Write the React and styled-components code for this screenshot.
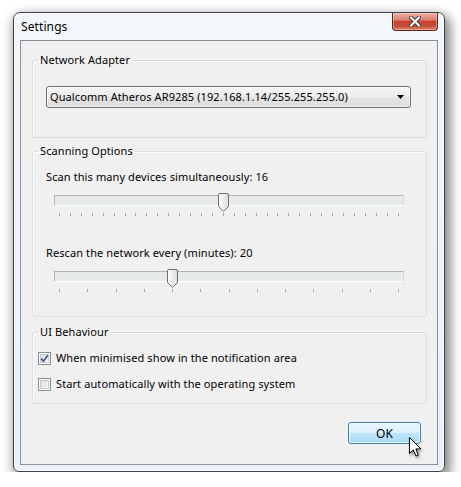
import styled, { createGlobalStyle } from "styled-components"

const GlobalStyle = createGlobalStyle`
  body {
    margin: 0;
    background: #fff;
    font-family: "Segoe UI", "Noto Sans", sans-serif;
    font-size: 11px;
    letter-spacing: 0.1px;
    color: #000;
  }
`

const Desktop = styled.div`
  padding: 12px 0 0 13px;
`

const Window = styled.div`
  box-sizing: border-box;
  width: 432px;
  height: 460px;
  display: flex;
  flex-direction: column;
  padding: 0 6px 6px 6px;
  border: 1px solid #3d4148;
  border-radius: 7px 7px 6px 6px;
  background: linear-gradient(#f3f7fc, #eaf1f9);
  box-shadow: inset 0 0 0 1px rgba(255, 255, 255, 0.8), 3px 5px 12px 2px rgba(0, 0, 0, 0.5);
`

const TitleBar = styled.div`
  height: 27px;
  display: flex;
  align-items: center;
  padding-left: 1px;
`

const Title = styled.span`
  line-height: 16px;
  font-size: 12px;
`

const CloseButton = styled.div`
  align-self: flex-start;
  margin-left: auto;
  box-sizing: border-box;
  width: 46px;
  height: 18px;
  display: flex;
  align-items: center;
  justify-content: center;
  border: 1px solid #5b251d;
  border-top: none;
  border-radius: 0 0 4px 4px;
  background: linear-gradient(#ebb0a3 0%, #dc8272 40%, #c8442f 50%, #c54b36 75%, #de8468 100%);
  box-shadow: inset 0 0 0 1px rgba(255, 220, 210, 0.45);
`

const Client = styled.div`
  flex: 1;
  display: flex;
  flex-direction: column;
  border: 1px solid #8b9099;
  background: #f0f0f0;
`

const Group = styled.fieldset`
  margin: ${p => p.$top}px 10px 0 11px;
  padding: 0;
  min-width: 0;
  border: 1px solid #d5dfe5;
  border-radius: 3px;
  box-shadow: inset 1px 1px 0 #fff;
`

const Legend = styled.legend`
  margin-left: 5px;
  padding: 0 2px;
  line-height: 16px;
`

const GroupBody = styled.div`
  display: flex;
  flex-direction: column;
  padding: ${p => p.$pad};
`

const Select = styled.div`
  box-sizing: border-box;
  width: 365px;
  height: 22px;
  display: flex;
  align-items: center;
  padding: 0 6px 0 3px;
  border: 1px solid #707070;
  border-radius: 3px;
  background: linear-gradient(#f4f4f4 0%, #ececec 50%, #e4e4e4 51%, #dcdcdc 100%);
  box-shadow: inset 0 0 0 1px rgba(255, 255, 255, 0.6);
`

const SelectText = styled.span`
  flex: 1;
  line-height: 16px;
  white-space: nowrap;
`

const Label = styled.div`
  line-height: 16px;
  margin-top: ${p => p.$top}px;
`

const Slider = styled.div`
  position: relative;
  width: 350px;
  height: 24px;
  margin: 8px 0 0 8px;
`

const Track = styled.div`
  box-sizing: border-box;
  margin-top: 2px;
  height: 11px;
  border: 1px solid #b3b3b3;
  border-bottom-color: #fff;
  border-right-color: #d8d8d8;
  background: #e7eaea;
`

const Ticks = styled.div`
  display: flex;
  justify-content: space-between;
  width: 340px;
  margin: 7px 0 0 5px;
`

const Tick = styled.div`
  width: 1px;
  height: 3px;
  background: #a7a7a7;
`

const Thumb = styled.svg`
  position: absolute;
  top: 0;
`

const CheckRow = styled.label`
  display: flex;
  align-items: center;
  gap: 5px;
  line-height: 16px;
  margin-top: ${p => p.$top}px;
`

const Box = styled.span`
  box-sizing: border-box;
  width: 13px;
  height: 13px;
  display: flex;
  align-items: center;
  justify-content: center;
  border: 1px solid #8e8f8f;
  background: linear-gradient(135deg, #d8d8d8, #fbfbfb);
  box-shadow: inset 0 0 0 1px #f6f6f6, inset 0 0 0 2px #c9ccd0;
`

const Footer = styled.div`
  display: flex;
  justify-content: flex-end;
  padding: 18px 16px 0 0;
`

const OkButton = styled.button`
  position: relative;
  box-sizing: border-box;
  width: 73px;
  height: 22px;
  padding: 0;
  font: inherit;
  font-size: 12px;
  letter-spacing: inherit;
  color: #000;
  border: 1px solid #3c7fb1;
  border-radius: 3px;
  background: linear-gradient(#eaf6fd 0%, #d9f0fc 50%, #bee6fd 51%, #a9dbf6 100%);
  box-shadow: inset 0 0 0 1px rgba(255, 255, 255, 0.7);
`

const Cursor = styled.svg`
  position: absolute;
  left: 60px;
  top: 14px;
  filter: drop-shadow(1px 2px 1.5px rgba(0, 0, 0, 0.4));
`

function TrackBar({ min, max, step, value }) {
  const count = (max - min) / step + 1
  const center = 5 + ((value - min) / (max - min)) * 339
  return (
    <Slider>
      <Track />
      <Ticks>
        {Array.from({ length: count }, (_, i) => <Tick key={i} />)}
      </Ticks>
      <Thumb width="11" height="19" viewBox="0 0 11 19" style={{ left: Math.round(center - 5) }}>
        <defs>
          <linearGradient id="thumbFill" x1="0" y1="0" x2="1" y2="0">
            <stop offset="0" stopColor="#ffffff" />
            <stop offset="1" stopColor="#dcdcdc" />
          </linearGradient>
        </defs>
        <path d="M2 0.5h7a1.5 1.5 0 0 1 1.5 1.5v11.5l-5 4.8l-5-4.8V2A1.5 1.5 0 0 1 2 0.5z" fill="url(#thumbFill)" stroke="#6f6f6f" />
      </Thumb>
    </Slider>
  )
}

function CheckBox({ checked }) {
  return (
    <Box>
      {checked && (
        <svg width="9" height="9" viewBox="0 0 9 9">
          <path d="M1.2 4.6L3.4 7.2L7.8 1.2" fill="none" stroke="#3e5494" strokeWidth="1.7" />
        </svg>
      )}
    </Box>
  )
}

export default function App() {
  return (
    <>
      <GlobalStyle />
      <Desktop>
        <Window>
          <TitleBar>
            <Title>Settings</Title>
            <CloseButton>
              <svg width="12" height="11" viewBox="0 0 12 11">
                <path d="M2 1.5L10 9.5M10 1.5L2 9.5" stroke="#3a3a3a" strokeWidth="4" strokeLinecap="square" />
                <path d="M2 1.5L10 9.5M10 1.5L2 9.5" stroke="#fff" strokeWidth="2" strokeLinecap="square" />
              </svg>
            </CloseButton>
          </TitleBar>
          <Client>
            <Group $top={11}>
              <Legend>Network Adapter</Legend>
              <GroupBody $pad="18px 0 29px 13px">
                <Select>
                  <SelectText>Qualcomm Atheros AR9285 (192.168.1.14/255.255.255.0)</SelectText>
                  <svg width="7" height="4" viewBox="0 0 7 4">
                    <path d="M0 0h7L3.5 4z" fill="#000" />
                  </svg>
                </Select>
              </GroupBody>
            </Group>
            <Group $top={5}>
              <Legend>Scanning Options</Legend>
              <GroupBody $pad="0 0 23px 13px">
                <Label $top={10}>Scan this many devices simultaneously: 16</Label>
                <TrackBar min={1} max={32} step={1} value={16} />
                <Label $top={28}>Rescan the network every (minutes): 20</Label>
                <TrackBar min={0} max={60} step={5} value={20} />
              </GroupBody>
            </Group>
            <Group $top={7}>
              <Legend>UI Behaviour</Legend>
              <GroupBody $pad="10px 0 11px 5px">
                <CheckRow $top={0}>
                  <CheckBox checked />
                  When minimised show in the notification area
                </CheckRow>
                <CheckRow $top={10}>
                  <CheckBox />
                  Start automatically with the operating system
                </CheckRow>
              </GroupBody>
            </Group>
            <Footer>
              <OkButton>
                OK
                <Cursor width="14" height="21" viewBox="0 0 14 21">
                  <path d="M0.5 0.5V16.5L4.3 12.8L7 19L9.4 18L6.8 11.9H11.8Z" fill="#fff" stroke="#000" strokeLinejoin="round" />
                </Cursor>
              </OkButton>
            </Footer>
          </Client>
        </Window>
      </Desktop>
    </>
  )
}
